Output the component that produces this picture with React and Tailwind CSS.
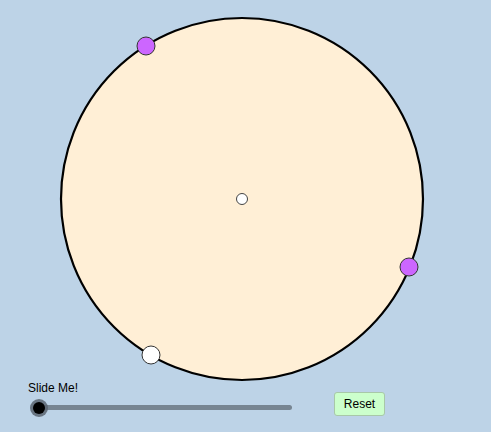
export default function App() {
  return (
    <div
      className="w-[491px] h-[432px] bg-[#bdd3e7] overflow-hidden"
      style={{ fontFamily: '"Liberation Sans", Arial, sans-serif' }}
    >
      {/* Geometry canvas */}
      <svg width="491" height="382" viewBox="0 0 491 382" className="block">
        <circle cx="242" cy="199" r="181" fill="#ffefd6" stroke="#000" strokeWidth="2.2" />
        <circle cx="242" cy="199" r="5.5" fill="#fff" stroke="#444" strokeWidth="1" />
        <circle cx="146" cy="46" r="9" fill="#cc66ff" stroke="#333" strokeWidth="1" />
        <circle cx="409" cy="267" r="9" fill="#cc66ff" stroke="#333" strokeWidth="1" />
        <circle cx="151" cy="355" r="9" fill="#fff" stroke="#333" strokeWidth="1" />
      </svg>

      {/* Controls */}
      <div className="flex items-start pl-[28px]">
        <div className="flex flex-col w-[270px]">
          <span className="text-[12px] leading-[13px] text-black">Slide Me!</span>
          <div className="relative h-[20px] mt-[2px]">
            <div className="absolute left-[11px] top-[8px] w-[253px] h-[5px] rounded-full bg-[#778592]" />
            <svg width="20" height="20" viewBox="0 0 20 20" className="absolute left-[1px] top-[0.5px]">
              <circle cx="10" cy="10" r="9" fill="#5a6470" opacity="0.85" />
              <circle cx="10" cy="10" r="6" fill="#000" />
            </svg>
          </div>
        </div>
        <button className="ml-[36px] mt-[10px] w-[51px] h-[24px] rounded-[3px] bg-[#ccffcc] border border-[#a8c8a8] text-[12px] text-black">
          Reset
        </button>
      </div>
    </div>
  );
}
